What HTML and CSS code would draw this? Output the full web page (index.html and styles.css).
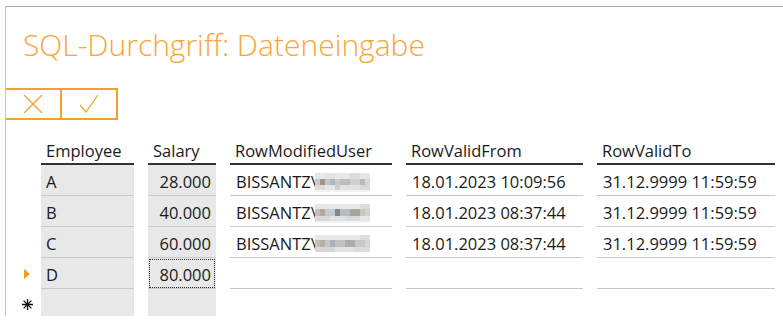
FILE: index.html
```html
<!DOCTYPE html>
<html lang="de">
<head>
<meta charset="utf-8">
<title>SQL-Durchgriff: Dateneingabe</title>
<link rel="stylesheet" href="styles.css">
</head>
<body>
<div class="frame">
  <h1 class="title">SQL-Durchgriff: Dateneingabe</h1>
  <div class="toolbar">
    <button class="tbtn" aria-label="Abbrechen">
      <svg width="20" height="20" viewBox="0 0 20 20"><path d="M1 1 L19 19 M19 1 L1 19" stroke="#f5a02a" stroke-width="1.2" fill="none"/></svg>
    </button>
    <button class="tbtn" aria-label="Speichern">
      <svg width="20" height="20" viewBox="0 0 20 20"><path d="M1 11 L7 18 L19 1" stroke="#f5a02a" stroke-width="1.2" fill="none"/></svg>
    </button>
  </div>
  <div class="grid">
    <div class="hd ind"></div>
    <div class="hd">Employee</div>
    <div class="hd">Salary</div>
    <div class="hd">RowModifiedUser</div>
    <div class="hd">RowValidFrom</div>
    <div class="hd">RowValidTo</div>

    <div class="ind"></div>
    <div class="c ro">A</div>
    <div class="c ro num">28.000</div>
    <div class="c">BISSANTZ\<span class="blur b1"></span></div>
    <div class="c">18.01.2023 10:09:56</div>
    <div class="c">31.12.9999 11:59:59</div>

    <div class="ind"></div>
    <div class="c ro">B</div>
    <div class="c ro num">40.000</div>
    <div class="c">BISSANTZ\<span class="blur b2"></span></div>
    <div class="c">18.01.2023 08:37:44</div>
    <div class="c">31.12.9999 11:59:59</div>

    <div class="ind"></div>
    <div class="c ro">C</div>
    <div class="c ro num">60.000</div>
    <div class="c">BISSANTZ\<span class="blur b3"></span></div>
    <div class="c">18.01.2023 08:37:44</div>
    <div class="c">31.12.9999 11:59:59</div>

    <div class="ind"><span class="arrow"></span></div>
    <div class="c ro">D</div>
    <div class="c ro num focus">80.000</div>
    <div class="c"></div>
    <div class="c"></div>
    <div class="c"></div>

    <div class="ind last">
      <svg class="star" width="11" height="11" viewBox="0 0 11 11"><path d="M5.5 0 V11 M0 5.5 H11 M1.6 1.6 L9.4 9.4 M9.4 1.6 L1.6 9.4" stroke="#111" stroke-width="1.3" fill="none"/></svg>
    </div>
    <div class="c ro last"></div>
    <div class="c ro last"></div>
    <div class="c last"></div>
    <div class="c last"></div>
    <div class="c last"></div>
  </div>
</div>
</body>
</html>
```

FILE: styles.css
```css
html, body {
  margin: 0;
  padding: 0;
  background: #ffffff;
}
body {
  font-family: "Open Sans", "Liberation Sans", sans-serif;
  color: #1a1a1a;
}
.frame {
  margin: 6px 0 0 5px;
  border-top: 1px solid #a4a4a4;
  border-left: 1px solid #c4c4c4;
  height: 310px;
  box-sizing: border-box;
}
.title {
  margin: 18px 0 0 17px;
  font-weight: 300;
  font-size: 30px;
  line-height: 40px;
  color: #f8a637;
  letter-spacing: 0;
}
.toolbar {
  display: flex;
  margin-top: 23px;
  width: 110px;
  border-top: 2px solid #f5a02a;
  border-bottom: 2px solid #f5a02a;
  border-right: 2px solid #f5a02a;
  height: 28px;
}
.tbtn {
  flex: 1;
  margin: 0;
  padding: 0;
  border: 0;
  background: transparent;
  display: flex;
  align-items: center;
  justify-content: center;
}
.tbtn + .tbtn {
  border-left: 2px solid #f5a02a;
}
.tbtn:first-child {
  flex: 0 0 54px;
}
.grid {
  margin-top: 10px;
  display: grid;
  grid-template-columns: 21px 93px 68px 162px 177px 178px;
  grid-template-rows: 35px 31px 31px 31px 31px 29px;
  column-gap: 14px;
  font-size: 16.5px;
  line-height: 22px;
}
.hd {
  border-bottom: 2px solid #333333;
  display: flex;
  align-items: flex-end;
  padding: 0 0 1px 5px;
}
.hd.ind {
  border-bottom: 0;
}
.c {
  border-bottom: 1px solid #c8c8c8;
  padding: 6px 6px 0 6px;
  white-space: nowrap;
  position: relative;
}
.c.last {
  border-bottom: 1px solid #d4d4d4;
}
.ro {
  background: #e8e8e8;
  padding-left: 5px;
}
.num {
  text-align: right;
  padding-right: 5px;
}
.focus {
  outline: 1px dotted #222222;
  outline-offset: -2px;
}
.ind {
  position: relative;
}
.arrow {
  position: absolute;
  left: 18px;
  top: 11px;
  width: 0;
  height: 0;
  border-top: 5px solid transparent;
  border-bottom: 5px solid transparent;
  border-left: 6px solid #f59a1e;
}
.star {
  position: absolute;
  left: 16px;
  top: 10px;
}
.blur {
  display: inline-block;
  width: 55px;
  height: 19px;
  vertical-align: -4px;
  margin-left: -2px;
}
.b1 {
  background:
    linear-gradient(to right, #e4e4e4 0 5px, #ece9e6 5px 10px, #e2e4e8 10px 20px, #e8e8e8 20px 35px, #dcdcd8 35px 45px, #e6e6e6 45px) 0 0 / 55px 6px no-repeat,
    linear-gradient(to right, #cfc8c2 0 5px, #a89282 5px 10px, #c3c7cc 10px 15px, #aeb6be 15px 20px, #c9c9c7 20px 25px, #bdbdbd 25px 35px, #cfcfcc 35px 45px, #b9b9b5 45px 50px, #d6d6d6 50px) 0 6px / 55px 6px no-repeat,
    linear-gradient(to right, #dcdcdc 0 10px, #e4e6e8 10px 20px, #c8ced2 20px 25px, #e2e2e2 25px 45px, #d8d8d8 45px) 0 12px / 55px 5px no-repeat,
    linear-gradient(#f2f2f2, #f2f2f2) 0 17px / 55px 2px no-repeat;
}
.b2 {
  background:
    linear-gradient(to right, #e6e6e6 0 10px, #e8e8e8 10px 45px, #dcdcdc 45px) 0 0 / 55px 5px no-repeat,
    linear-gradient(to right, #c8bdb4 0 5px, #b3a79d 5px 10px, #c3c9ce 10px 20px, #7f8a90 20px 25px, #b9bbbd 25px 35px, #a9a39c 35px 45px, #c6c6c2 45px 50px, #d2d2d2 50px) 0 5px / 55px 7px no-repeat,
    linear-gradient(to right, #d8d8d8 0 15px, #dfe2e5 15px 30px, #dadada 30px 45px, #e6e6e6 45px) 0 12px / 55px 5px no-repeat,
    linear-gradient(#f2f2f2, #f2f2f2) 0 17px / 55px 2px no-repeat;
}
.b3 {
  background:
    linear-gradient(to right, #e8e8e8 0 45px, #dedede 45px) 0 0 / 55px 5px no-repeat,
    linear-gradient(to right, #c6bdb5 0 5px, #b8b0a8 5px 10px, #c2c8cd 10px 15px, #acb4bb 15px 20px, #c2c2c2 20px 30px, #b1aba5 30px 40px, #c8c8c4 40px 50px, #d4d4d4 50px) 0 5px / 55px 7px no-repeat,
    linear-gradient(to right, #d6d6d6 0 20px, #e0e2e4 20px 40px, #dcdcdc 40px) 0 12px / 55px 5px no-repeat;
}
```
